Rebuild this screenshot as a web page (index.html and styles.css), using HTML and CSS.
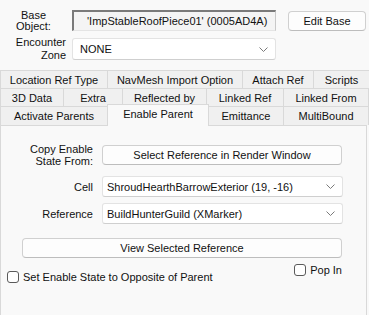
FILE: index.html
```html
<!DOCTYPE html>
<html lang="en">
<head>
  <meta charset="UTF-8">
  <title>Reference - Enable Parent</title>
  <link rel="stylesheet" href="styles.css">
</head>
<body>
  <div class="head">
    <div class="row row-base">
      <div class="label label-center">Base<br>Object:</div>
      <div class="textbox">'ImpStableRoofPiece01' (0005AD4A)</div>
      <div class="button btn-edit">Edit Base</div>
    </div>
    <div class="row row-zone">
      <div class="label">Encounter<br>Zone</div>
      <div class="combo combo-zone">
        <span>NONE</span>
        <svg class="chev" width="9" height="5" viewBox="0 0 9 5"><polyline points="0.5,0.5 4.5,4.5 8.5,0.5" fill="none" stroke="#7a7a7a" stroke-width="1"/></svg>
      </div>
    </div>
  </div>

  <div class="tabs">
    <div class="tab-row">
      <div class="tab w107">Location Ref Type</div>
      <div class="tab w135">NavMesh Import Option</div>
      <div class="tab w71">Attach Ref</div>
      <div class="tab w56">Scripts</div>
    </div>
    <div class="tab-row">
      <div class="tab w63">3D Data</div>
      <div class="tab w59">Extra</div>
      <div class="tab w84">Reflected by</div>
      <div class="tab w77">Linked Ref</div>
      <div class="tab w86">Linked From</div>
    </div>
    <div class="tab-row">
      <div class="tab w107">Activate Parents</div>
      <div class="tab w101 active">Enable Parent</div>
      <div class="tab w75">Emittance</div>
      <div class="tab w86">MultiBound</div>
    </div>
  </div>

  <div class="panel">
    <div class="prow prow-copy">
      <div class="plabel">Copy Enable<br>State From:</div>
      <div class="button btn-wide">Select Reference in Render Window</div>
    </div>
    <div class="prow prow-cell">
      <div class="plabel">Cell</div>
      <div class="combo combo-wide">
        <span>ShroudHearthBarrowExterior (19, -16)</span>
        <svg class="chev" width="9" height="5" viewBox="0 0 9 5"><polyline points="0.5,0.5 4.5,4.5 8.5,0.5" fill="none" stroke="#7a7a7a" stroke-width="1"/></svg>
      </div>
    </div>
    <div class="prow prow-ref">
      <div class="plabel">Reference</div>
      <div class="combo combo-wide">
        <span>BuildHunterGuild (XMarker)</span>
        <svg class="chev" width="9" height="5" viewBox="0 0 9 5"><polyline points="0.5,0.5 4.5,4.5 8.5,0.5" fill="none" stroke="#7a7a7a" stroke-width="1"/></svg>
      </div>
    </div>
    <div class="button btn-view">View Selected Reference</div>
    <div class="checks">
      <label class="check check-opposite"><span class="box"></span>Set Enable State to Opposite of Parent</label>
      <label class="check check-popin"><span class="box"></span>Pop In</label>
    </div>
  </div>
</body>
</html>
```

FILE: styles.css
```css
* { box-sizing: border-box; margin: 0; padding: 0; }
body {
  font-family: 'Liberation Sans', Arial, sans-serif;
  font-size: 11px;
  color: #111;
  background: #f9f9f9;
  width: 369px;
  height: 315px;
  overflow: hidden;
}
.head {
  padding-top: 10px;
}
.row {
  display: flex;
  align-items: center;
}
.row-base { height: 21px; }
.row-zone {
  height: 22px;
  margin-top: 7px;
}
.label {
  width: 66px;
  margin-right: 6px;
  text-align: right;
  line-height: 13px;
}
.label-center {
  width: 67px;
  margin-right: 5px;
  text-align: center;
  line-height: 11px;
}
.textbox {
  width: 204px;
  height: 21px;
  padding: 3px 0 0 13px;
  background: #f4f4f4;
  border-top: 2px solid #7a7a7a;
  border-left: 2px solid #7a7a7a;
  border-right: 1px solid #c8c8c8;
  border-bottom: 1px solid #e4e4e4;
  white-space: nowrap;
}
.button {
  display: flex;
  align-items: center;
  justify-content: center;
  height: 20px;
  background: #fdfdfd;
  border: 1px solid #d0d0d0;
  border-bottom-color: #bdbdbd;
  border-radius: 4px;
  white-space: nowrap;
}
.btn-edit {
  width: 78px;
  margin-left: 12px;
  margin-top: 1px;
}
.combo {
  display: flex;
  align-items: center;
  justify-content: space-between;
  height: 22px;
  padding: 0 7px 0 6px;
  background: #fff;
  border: 1px solid #e3e3e3;
  border-bottom-color: #cfcfcf;
  border-radius: 3px;
  white-space: nowrap;
}
.combo-zone {
  width: 204px;
  padding-left: 7px;
}
.chev { flex: none; }

.tabs {
  margin-top: 10px;
}
.tab-row {
  display: flex;
  height: 18px;
}
.tab-row:last-child { height: 19px; }
.tab {
  display: flex;
  align-items: center;
  justify-content: center;
  background: #f0f0f0;
  border: 1px solid #d9d9d9;
  border-bottom: none;
  margin-right: -1px;
  white-space: nowrap;
}
.tab.active {
  background: #f9f9f9;
  margin-top: -2px;
  height: 22px;
  position: relative;
  z-index: 1;
  padding-bottom: 3px;
}
.w107 { width: 108px; }
.w135 { width: 136px; }
.w71 { width: 72px; }
.w56 { width: 57px; }
.w63 { width: 64px; }
.w59 { width: 60px; }
.w84 { width: 85px; }
.w77 { width: 78px; }
.w86 { width: 86px; }
.w101 { width: 102px; }
.w75 { width: 76px; }

.panel {
  width: 367px;
  height: 200px;
  background: #f9f9f9;
  border: 1px solid #d9d9d9;
  padding-top: 19px;
}
.prow {
  display: flex;
  align-items: center;
}
.prow-copy { height: 20px; }
.plabel {
  width: 92px;
  margin-right: 9px;
  text-align: right;
  line-height: 12px;
}
.btn-wide {
  width: 240px;
}
.prow-cell {
  margin-top: 11px;
}
.prow-ref {
  margin-top: 6px;
}
.combo-wide {
  width: 241px;
  height: 21px;
  padding-left: 4px;
}
.btn-view {
  width: 320px;
  margin: 14px 0 0 21px;
}
.checks {
  display: flex;
  align-items: flex-start;
  justify-content: space-between;
  width: 341px;
  margin-top: 6px;
}
.check {
  display: flex;
  align-items: center;
  gap: 4px;
  white-space: nowrap;
}
.check-opposite {
  margin: 7px 0 0 6px;
}
.box {
  width: 12px;
  height: 12px;
  background: #fff;
  border: 1px solid #5a5a5a;
  border-radius: 3px;
}
```
